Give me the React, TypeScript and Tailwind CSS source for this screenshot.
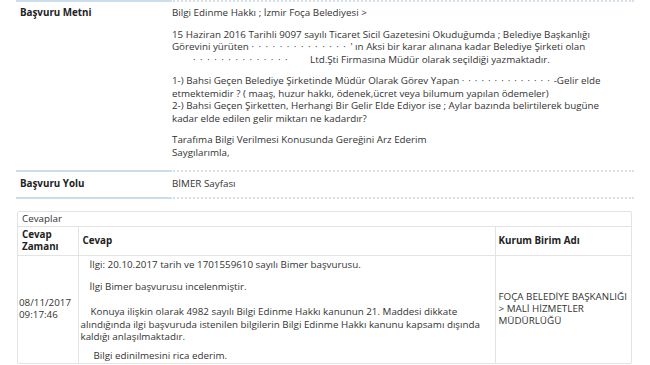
const dots = "··············";

function Row({ label, children, pad }: { label: string; children: React.ReactNode; pad: string }) {
  return (
    <div className="flex">
      <div className={`w-[154px] shrink-0 border-t-2 border-[#cddcea] pl-1 font-bold text-[#222] ${pad}`}>{label}</div>
      <div className={`flex-1 border-t-2 border-dotted border-[#d5dfe9] pl-[2px] ${pad}`}>{children}</div>
    </div>
  );
}

export default function App() {
  return (
    <main
      className="min-h-screen w-[650px] bg-white px-4 text-[9.8px] leading-[12.5px] text-[#333]"
      style={{ fontFamily: '"Open Sans", "Noto Sans", sans-serif' }}
    >
      <Row label="Başvuru Metni" pad="pt-[5px] pb-[11px]">
        <p>Bilgi Edinme Hakkı ; İzmir Foça Belediyesi &gt;</p>
        <p className="mt-[9px]">15 Haziran 2016 Tarihli 9097 sayılı Ticaret Sicil Gazetesini Okuduğumda ; Belediye Başkanlığı</p>
        <p>
          Görevini yürüten <span className="tracking-[4.5px]">{dots}</span>' ın Aksi bir karar alınana kadar Belediye Şirketi olan
        </p>
        <p>
          <span className="ml-[21px] tracking-[4.5px]">{dots}</span>
          <span className="ml-[18px]">Ltd.Şti Firmasına Müdür olarak seçildiği yazmaktadır.</span>
        </p>
        <p className="mt-[9px]">
          1-) Bahsi Geçen Belediye Şirketinde Müdür Olarak Görev Yapan <span className="tracking-[4px]">{dots}</span>-Gelir elde
        </p>
        <p>etmektemidir ? ( maaş, huzur hakkı, ödenek,ücret veya bilumum yapılan ödemeler)</p>
        <p>2-) Bahsi Geçen Şirketten, Herhangi Bir Gelir Elde Ediyor ise ; Aylar bazında belirtilerek bugüne</p>
        <p>kadar elde edilen gelir miktarı ne kadardır?</p>
        <p className="mt-[9px]">Tarafıma Bilgi Verilmesi Konusunda Gereğini Arz Ederim</p>
        <p>Saygılarımla,</p>
      </Row>

      <Row label="Başvuru Yolu" pad="pt-[6px] pb-[6px]">
        <p>BİMER Sayfası</p>
      </Row>
      <div className="flex">
        <div className="w-[154px] border-t-2 border-[#cddcea]" />
        <div className="flex-1 border-t-2 border-dotted border-[#d5dfe9]" />
      </div>

      <section className="mt-[12px] ml-[1px] w-[615px] rounded-[2px] border border-[#e3e3e3]">
        <div className="border-b border-[#e3e3e3] px-1 py-[1px]">Cevaplar</div>
        <table className="w-full border-collapse">
          <thead>
            <tr className="font-bold text-[#222]">
              <th className="w-[60px] border-r border-b border-[#e3e3e3] px-1 py-[2px] text-left align-middle leading-[12px]">
                Cevap
                <br />
                Zamanı
              </th>
              <th className="w-[417px] border-r border-b border-[#e3e3e3] px-1 text-left align-middle">Cevap</th>
              <th className="border-b border-[#e3e3e3] px-[3px] text-left align-middle">Kurum Birim Adı</th>
            </tr>
          </thead>
          <tbody>
            <tr>
              <td className="border-r border-[#e3e3e3] px-[1px] align-middle leading-[12px]">
                08/11/2017
                <br />
                09:17:46
              </td>
              <td className="border-r border-[#e3e3e3] pl-[2px] pr-[3px] pt-[3px] pb-0 align-top">
                <p className="pl-[9px]">İlgi: 20.10.2017 tarih ve 1701559610 sayılı Bimer başvurusu.</p>
                <p className="mt-[9.5px] pl-[9px]">İlgi Bimer başvurusu incelenmiştir.</p>
                <p className="mt-[12.5px] indent-[10px]">
                  Konuya ilişkin olarak 4982 sayılı Bilgi Edinme Hakkı kanunun 21. Maddesi dikkate
                  <br />
                  alındığında ilgi başvuruda istenilen bilgilerin Bilgi Edinme Hakkı kanunu kapsamı dışında
                  <br />
                  kaldığı anlaşılmaktadır.
                </p>
                <p className="mt-[6.5px] pl-[13px]">Bilgi edinilmesini rica ederim.</p>
              </td>
              <td className="px-[3px] align-middle leading-[12px]">
                FOÇA BELEDİYE BAŞKANLIĞI
                <br />
                &gt; MALİ HİZMETLER
                <br />
                MÜDÜRLÜĞÜ
              </td>
            </tr>
          </tbody>
        </table>
      </section>
    </main>
  );
}
